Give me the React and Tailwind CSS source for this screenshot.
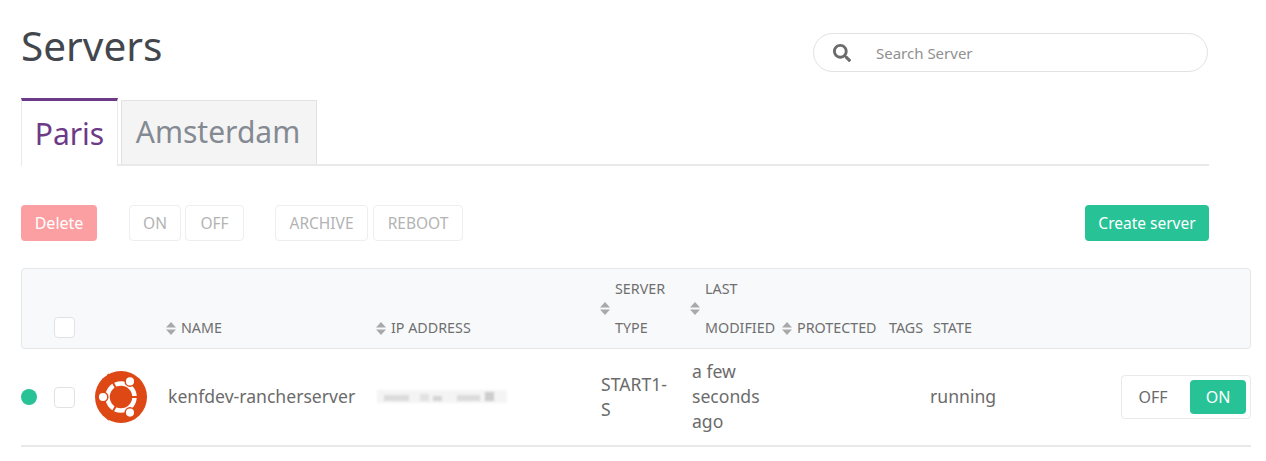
import React from "react";
import { FaSearch } from "react-icons/fa";

const SortIcon = () => (
  <svg width="10" height="13" viewBox="0 0 10 13" className="shrink-0">
    <path d="M5 0L10 5.5H0Z M5 13L0 7.5H10Z" fill="#a9a9a9" />
  </svg>
);

const UbuntuLogo = () => (
  <svg width="52" height="52" viewBox="0 0 52 52">
    <circle cx="26" cy="26" r="26" fill="#dd4814" />
    <circle cx="26" cy="26" r="13.5" fill="none" stroke="#fff" strokeWidth="4.5" />
    <g stroke="#dd4814" strokeWidth="2">
      <path d="M26 26L13 3" />
      <path d="M26 26L13 49" />
      <path d="M26 26L52 26" />
    </g>
    <g fill="#fff" stroke="#dd4814" strokeWidth="1.5">
      <circle cx="8" cy="26" r="4.8" />
      <circle cx="35" cy="10.4" r="4.8" />
      <circle cx="35" cy="41.6" r="4.8" />
    </g>
  </svg>
);

const BlurredAddress = () => (
  <svg width="130" height="16" viewBox="0 0 130 16" className="ml-0.5 blur-[1px]">
    <rect x="0" y="1" width="130" height="13" fill="#f4f4f4" />
    <rect x="7" y="6" width="25" height="6" fill="#dcdcdc" />
    <rect x="43" y="5" width="9" height="7" fill="#e2e2e2" />
    <rect x="56" y="7" width="9" height="5" fill="#d4d4d4" />
    <rect x="80" y="6" width="23" height="6" fill="#dcdcdc" />
    <rect x="108" y="3" width="9" height="9" fill="#cdcdcd" />
  </svg>
);

const headerCell = "flex items-center gap-[5px] text-[14.3px] leading-5 text-[#6f6f6f]";
const gridCols =
  "grid grid-cols-[33px_41px_72px_208px_224px_90px_92px_106px_43px_191px_130px]";

const OutlineButton = ({ width, children }) => (
  <button className={`h-9 rounded border border-[#eeeeee] pt-px text-[15.5px] text-[#b3b3b3] ${width}`}>
    {children}
  </button>
);

export default function App() {
  return (
    <div
      className="h-[461px] w-[1266px] overflow-hidden bg-white pl-[21px] text-[#6b6b6b]"
      style={{ fontFamily: '"Noto Sans", sans-serif' }}
    >
      <div className="flex h-[98px] w-[1187px] items-start justify-between">
        <h1 className="mt-[18px] text-[40.5px] leading-[56px] text-[#43474d]">Servers</h1>
        <div className="mt-[33px] flex h-[39px] w-[395px] items-center rounded-full border border-[#e2e2e2]">
          <FaSearch size={18} className="ml-[19px] text-[#6b6b6b]" />
          <span className="ml-[25px] pt-px text-[15px] text-[#909090]">Search Server</span>
        </div>
      </div>

      <div className="flex h-[68px] w-[1188px] items-end gap-[3px] border-b-2 border-[#e9e9e9]">
        <div className="-mb-0.5 flex h-[68px] w-[97px] items-center justify-center border-x border-t-[3px] border-[#e9e9e9] border-t-[#6c3a87] bg-white text-[30px] text-[#6c3a87]">
          Paris
        </div>
        <div className="flex h-[64px] w-[196px] items-center justify-center border-x border-t border-[#e2e2e2] bg-[#f4f4f4] pb-0.5 pr-0.5 text-[30px] text-[#848a92]">
          Amsterdam
        </div>
      </div>

      <div className="mt-[39px] flex h-9 w-[1188px] items-center">
        <button className="h-9 w-[76px] rounded bg-[#fc9fa2] text-[16px] text-white">Delete</button>
        <div className="ml-[32px] flex gap-1">
          <OutlineButton width="w-[52px]">ON</OutlineButton>
          <OutlineButton width="w-[59px]">OFF</OutlineButton>
        </div>
        <div className="ml-[31px] flex gap-[5px]">
          <OutlineButton width="w-[93px]">ARCHIVE</OutlineButton>
          <OutlineButton width="w-[90px]">REBOOT</OutlineButton>
        </div>
        <button className="ml-auto h-9 w-[124px] rounded bg-[#27c296] pt-px text-[15.5px] text-white">
          Create server
        </button>
      </div>

      <div className="mt-[27px] w-[1230px]">
        <div className={`${gridCols} h-[81px] items-end rounded border border-[#e4e6e8] bg-[#f8f9fb] pb-[10px]`}>
          <div />
          <div>
            <div className="-ml-px h-[21px] w-[21px] rounded border border-[#e2e2e2] bg-white" />
          </div>
          <div />
          <div className={`${headerCell} -ml-[2px]`}>
            <SortIcon />
            NAME
          </div>
          <div className={headerCell}>
            <SortIcon />
            IP ADDRESS
          </div>
          <div className={headerCell}>
            <SortIcon />
            <div className="flex flex-col gap-[19px]">
              <span>SERVER</span>
              <span>TYPE</span>
            </div>
          </div>
          <div className={headerCell}>
            <SortIcon />
            <div className="flex flex-col gap-[19px]">
              <span>LAST</span>
              <span>MODIFIED</span>
            </div>
          </div>
          <div className={headerCell}>
            <SortIcon />
            PROTECTED
          </div>
          <div className={`${headerCell} pl-px`}>TAGS</div>
          <div className={`${headerCell} pl-0.5`}>STATE</div>
          <div />
        </div>

        <div className={`${gridCols} h-[98px] items-center border-b-2 border-[#e9e9e9] text-[17.6px]`}>
          <div className="h-4 w-4 rounded-full bg-[#27c296]" />
          <div className="h-[21px] w-[21px] rounded border border-[#e2e2e2] bg-white" />
          <UbuntuLogo />
          <div className="pb-px pl-px">kenfdev-rancherserver</div>
          <BlurredAddress />
          <div className="w-[74px] pb-px pl-0.5 leading-[25px]">START1-S</div>
          <div className="pb-0.5 pl-[3px] pr-4 leading-[25px]">a few seconds ago</div>
          <div />
          <div />
          <div className="pb-px">running</div>
          <div className="flex h-[44px] w-[130px] items-center rounded border border-[#e9e9e9] p-1">
            <span className="flex-1 pr-[10px] text-center text-[16px]">OFF</span>
            <span className="flex h-[34px] w-[56px] items-center justify-center rounded bg-[#27c296] text-[16px] text-white">
              ON
            </span>
          </div>
        </div>
      </div>
    </div>
  );
}
